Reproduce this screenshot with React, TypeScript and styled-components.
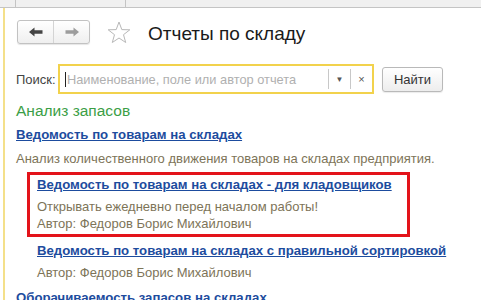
import React from 'react';
import styled, { createGlobalStyle } from 'styled-components';

const GlobalStyle = createGlobalStyle`
  html, body {
    margin: 0;
    padding: 0;
    background: #fff;
    font-family: "Liberation Sans", Arial, sans-serif;
    overflow: hidden;
  }
  * { box-sizing: border-box; }
`;

const Page = styled.div`
  width: 481px;
  height: 300px;
  display: flex;
  flex-direction: column;
  overflow: hidden;
`;

const TopStrip = styled.div`
  flex-shrink: 0;
  height: 8px;
  background: #f0f0f0;
  border-bottom: 1px solid #c4c4c4;
  display: flex;
`;

const TabCell = styled.div<{ w: number }>`
  width: ${(p) => p.w}px;
  border-right: 1px solid #c4c4c4;
`;

const Body = styled.div`
  flex: 1;
  min-height: 0;
  overflow: hidden;
  margin-left: 3px;
  border-left: 2px solid #f4e08a;
  padding: 12px 0 0 11px;
  display: flex;
  flex-direction: column;
`;

const Header = styled.div`
  display: flex;
  align-items: center;
  height: 24px;
  flex-shrink: 0;
`;

const NavGroup = styled.div`
  display: flex;
  width: 73px;
  height: 24px;
  margin-left: 1px;
  border: 1px solid #c2c2c2;
  border-radius: 3px;
  background: linear-gradient(#ffffff, #efefef);
  box-shadow: 0 1px 1px rgba(0, 0, 0, 0.1);
`;

const NavBtn = styled.div<{ divider?: boolean }>`
  flex: 1;
  display: flex;
  align-items: center;
  justify-content: center;
  border-right: ${(p) => (p.divider ? '1px solid #d4d4d4' : 'none')};
`;

const Star = styled.div`
  margin-left: 17px;
  width: 24px;
  height: 24px;
  display: flex;
  align-items: center;
  justify-content: center;
`;

const Title = styled.div`
  margin-left: 17px;
  margin-top: 3px;
  font-size: 19px;
  color: #1a1a1a;
  white-space: nowrap;
`;

const SearchRow = styled.div`
  display: flex;
  align-items: center;
  margin-top: 20px;
  flex-shrink: 0;
`;

const SearchLabel = styled.span`
  font-size: 13px;
  color: #444;
  width: 42px;
`;

const SearchBox = styled.div`
  width: 316px;
  height: 30px;
  border: 2px solid #f2d24c;
  display: flex;
  align-items: center;
  background: #fff;
`;

const SearchInput = styled.div`
  flex: 1;
  display: flex;
  align-items: center;
  font-size: 12.8px;
  color: #b0b0b0;
  padding-left: 5px;
  white-space: nowrap;
  overflow: hidden;
`;

const Caret = styled.span`
  width: 1px;
  height: 15px;
  background: #222;
  margin-right: 1px;
`;

const BoxBtn = styled.div<{ small?: boolean }>`
  width: 22px;
  height: 20px;
  border-left: 1px solid #c8c8c8;
  display: flex;
  align-items: center;
  justify-content: center;
  font-size: ${(p) => (p.small ? 8 : 11)}px;
  color: #555;
`;

const FindButton = styled.button`
  margin-left: 8px;
  width: 61px;
  height: 25px;
  border: 1px solid #b9b9b9;
  border-radius: 3px;
  background: linear-gradient(#ffffff, #ededed);
  box-shadow: 0 1px 1px rgba(0, 0, 0, 0.08);
  font-family: "Liberation Sans", Arial, sans-serif;
  font-size: 13px;
  color: #333;
  padding: 0;
`;

const Group = styled.div`
  font-size: 15.5px;
  line-height: 18px;
  color: #3b9e46;
  margin-top: 8px;
  flex-shrink: 0;
`;

const Item = styled.div<{ indent?: boolean; marked?: boolean; gap: number }>`
  flex-shrink: 0;
  display: flex;
  flex-direction: column;
  align-self: flex-start;
  margin-left: ${(p) => (p.indent ? (p.marked ? 11 : 21) : 0)}px;
  margin-top: ${(p) => p.gap}px;
  padding: ${(p) => (p.marked ? '1px 7px 2px 7px' : '0')};
  border: ${(p) => (p.marked ? '3px solid #e3131a' : 'none')};
  width: ${(p) => (p.marked ? '383px' : 'auto')};
`;

const Link = styled.a`
  font-size: 13.2px;
  font-weight: bold;
  color: #1d4c9e;
  text-decoration: underline;
  line-height: 17px;
  white-space: nowrap;
`;

const Note = styled.div<{ gap?: number }>`
  font-size: 13px;
  color: #7d7458;
  line-height: 17px;
  margin-top: ${(p) => p.gap ?? 0}px;
  white-space: nowrap;
`;

const StarIcon = () => (
  <svg width="24" height="23" viewBox="0 0 24 23">
    <polygon
      points="12,1 14.8,8.6 22.8,8.8 16.5,13.7 18.7,21.5 12,17 5.3,21.5 7.5,13.7 1.2,8.8 9.2,8.6"
      fill="none"
      stroke="#b8b8b8"
      strokeWidth="1"
    />
  </svg>
);

const Arrow = ({ dir, color }: { dir: 'left' | 'right'; color: string }) => (
  <svg width="14" height="10" viewBox="0 0 14 10">
    <g transform={dir === 'right' ? 'translate(14,0) scale(-1,1)' : undefined}>
      <polygon points="0,5 5.5,0.5 5.5,3.3 13.5,3.3 13.5,6.7 5.5,6.7 5.5,9.5" fill={color} />
    </g>
  </svg>
);

export default function App() {
  return (
    <Page>
      <GlobalStyle />
      <TopStrip>
        <TabCell w={16} />
        <TabCell w={110} />
      </TopStrip>
      <Body>
        <Header>
          <NavGroup>
            <NavBtn divider>
              <Arrow dir="left" color="#444" />
            </NavBtn>
            <NavBtn>
              <Arrow dir="right" color="#9d9d9d" />
            </NavBtn>
          </NavGroup>
          <Star>
            <StarIcon />
          </Star>
          <Title>Отчеты по складу</Title>
        </Header>
        <SearchRow>
          <SearchLabel>Поиск:</SearchLabel>
          <SearchBox>
            <SearchInput>
              <Caret />
              Наименование, поле или автор отчета
            </SearchInput>
            <BoxBtn small>▼</BoxBtn>
            <BoxBtn>×</BoxBtn>
          </SearchBox>
          <FindButton>Найти</FindButton>
        </SearchRow>
        <Group>Анализ запасов</Group>
        <Item gap={6}>
          <Link>Ведомость по товарам на складах</Link>
          <Note gap={7}>Анализ количественного движения товаров на складах предприятия.</Note>
        </Item>
        <Item indent marked gap={5}>
          <Link>Ведомость по товарам на складах - для кладовщиков</Link>
          <Note gap={5}>Открывать ежедневно перед началом работы!</Note>
          <Note>Автор: Федоров Борис Михайлович</Note>
        </Item>
        <Item indent gap={5}>
          <Link>Ведомость по товарам на складах с правильной сортировкой</Link>
          <Note gap={5}>Автор: Федоров Борис Михайлович</Note>
        </Item>
        <Item gap={8}>
          <Link>Оборачиваемость запасов на складах</Link>
        </Item>
      </Body>
    </Page>
  );
}
